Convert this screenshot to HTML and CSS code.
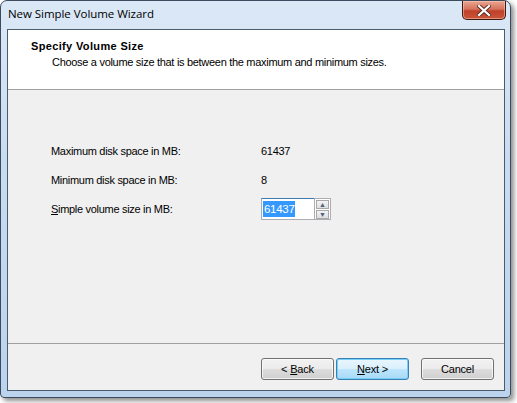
FILE: index.html
```html
<!DOCTYPE html>
<html lang="en">
<head>
    <meta charset="UTF-8">
    <meta name="viewport" content="width=device-width, initial-scale=1.0">
    <title>New Simple Volume Wizard</title>
    <link rel="stylesheet" href="styles.css">
</head>
<body>
    <div class="window">
        <div class="titlebar">
            <span class="title">New Simple Volume Wizard</span>
            <button class="close" aria-label="Close">
                <svg width="14" height="11" viewBox="0 0 14 11">
                    <path d="M2 1 L12 10 M12 1 L2 10" stroke="#5a2a22" stroke-width="4" stroke-linecap="square"/>
                    <path d="M2 1 L12 10 M12 1 L2 10" stroke="#fff" stroke-width="2.2" stroke-linecap="square"/>
                </svg>
            </button>
        </div>
        <div class="client">
            <div class="header">
                <h1>Specify Volume Size</h1>
                <p>Choose a volume size that is between the maximum and minimum sizes.</p>
            </div>
            <div class="content">
                <div class="row">
                    <span class="label">Maximum disk space in MB:</span>
                    <span class="value">61437</span>
                </div>
                <div class="row">
                    <span class="label">Minimum disk space in MB:</span>
                    <span class="value">8</span>
                </div>
                <div class="row">
                    <span class="label"><u>S</u>imple volume size in MB:</span>
                    <div class="spinner">
                        <div class="field"><span class="selected">61437</span></div>
                        <div class="spin">
                            <div class="spin-btn">&#9650;</div>
                            <div class="spin-btn">&#9660;</div>
                        </div>
                    </div>
                </div>
            </div>
            <div class="footer">
                <button class="btn">&lt; <u>B</u>ack</button>
                <button class="btn primary"><u>N</u>ext &gt;</button>
                <button class="btn cancel">Cancel</button>
            </div>
        </div>
    </div>
</body>
</html>
```

FILE: styles.css
```css
* {
    margin: 0;
    padding: 0;
    box-sizing: border-box;
}

body {
    width: 517px;
    height: 403px;
    background: #fff;
    font-family: 'Liberation Sans', Arial, sans-serif;
    font-size: 11px;
    letter-spacing: -0.3px;
    color: #000;
    overflow: hidden;
}

/* Aero frame */
.window {
    width: 511px;
    height: 398px;
    display: flex;
    flex-direction: column;
    border: 1px solid #3b4a5c;
    border-radius: 7px 7px 4px 4px;
    background: linear-gradient(180deg, #dbe8f6 0%, #c8dcf1 40%, #bcd3ee 100%);
    box-shadow: 3px 3px 5px rgba(0, 0, 0, 0.45);
    padding: 0 5px 6px 6px;
}

.titlebar {
    height: 28px;
    display: flex;
    justify-content: space-between;
    align-items: flex-start;
}

.title {
    font-family: 'Open Sans', sans-serif;
    font-size: 11.5px;
    color: #000;
    margin-top: 5px;
    margin-left: 1px;
    letter-spacing: -0.05px;
}

.close {
    width: 44px;
    height: 19px;
    margin-right: -1px;
    border: 1px solid #3d1a14;
    border-top: none;
    border-radius: 0 0 5px 5px;
    background: linear-gradient(180deg, #e8a593 0%, #d6735c 45%, #c1412a 55%, #c8553a 100%);
    box-shadow: inset 0 0 0 1px rgba(255, 210, 190, 0.5);
    display: flex;
    justify-content: center;
    align-items: center;
}

/* client area */
.client {
    flex: 1;
    display: flex;
    flex-direction: column;
    background: #f0f0f0;
    border: 1px solid #4a5b6e;
}

.header {
    height: 60px;
    background: #fff;
    border-bottom: 1px solid #a0a0a0;
    padding: 10px 0 0 23px;
}

.header h1 {
    font-size: 11px;
    font-weight: bold;
    line-height: 13px;
    letter-spacing: 0.35px;
}

.header p {
    margin-top: 3px;
    margin-left: 21px;
    line-height: 13px;
}

.content {
    flex: 1;
    padding: 54px 0 0 43px;
    border-bottom: 1px solid #a0a0a0;
    display: flex;
    flex-direction: column;
    gap: 16px;
}

.row {
    display: flex;
    align-items: center;
    height: 13px;
}

.label {
    width: 210px;
}

.spinner {
    display: flex;
    height: 22px;
}

.field {
    width: 53px;
    height: 22px;
    background: #fff;
    border: 1px solid #abadb3;
    border-top-color: #3d7bad;
    border-right: none;
    padding: 2px 0 0 1px;
}

.selected {
    display: inline-block;
    background: #3399ff;
    color: #fff;
    padding: 1px 1px;
    line-height: 14px;
    font-size: 11.5px;
}

.spin {
    width: 17px;
    display: flex;
    flex-direction: column;
    border: 1px solid #abadb3;
    background: #fff;
    padding: 1px;
    gap: 1px;
}

.spin-btn {
    flex: 1;
    border: 1px solid #a8a8a8;
    background: linear-gradient(180deg, #f4f4f4, #dedede);
    color: #4d6185;
    font-size: 7px;
    line-height: 7px;
    letter-spacing: 0;
    display: flex;
    justify-content: center;
    align-items: center;
}

.footer {
    height: 46px;
    display: flex;
    align-items: flex-start;
    padding: 14px 0 0 253px;
}

.btn {
    width: 73px;
    height: 22px;
    font-family: 'Liberation Sans', Arial, sans-serif;
    font-size: 11px;
    letter-spacing: -0.2px;
    color: #000;
    border: 1px solid #707070;
    border-radius: 3px;
    background: linear-gradient(180deg, #f2f2f2 0%, #ebebeb 50%, #dddddd 51%, #cfcfcf 100%);
    box-shadow: inset 0 0 0 1px rgba(255, 255, 255, 0.7);
}

.btn.primary {
    margin-left: 2px;
    border-color: #3c7fb1;
    background: linear-gradient(180deg, #eaf6fd 0%, #d9f0fc 50%, #bee6fd 51%, #a7d9f5 100%);
    box-shadow: inset 0 0 0 1px #74d0fb;
}

.btn.cancel {
    margin-left: 12px;
}
```
